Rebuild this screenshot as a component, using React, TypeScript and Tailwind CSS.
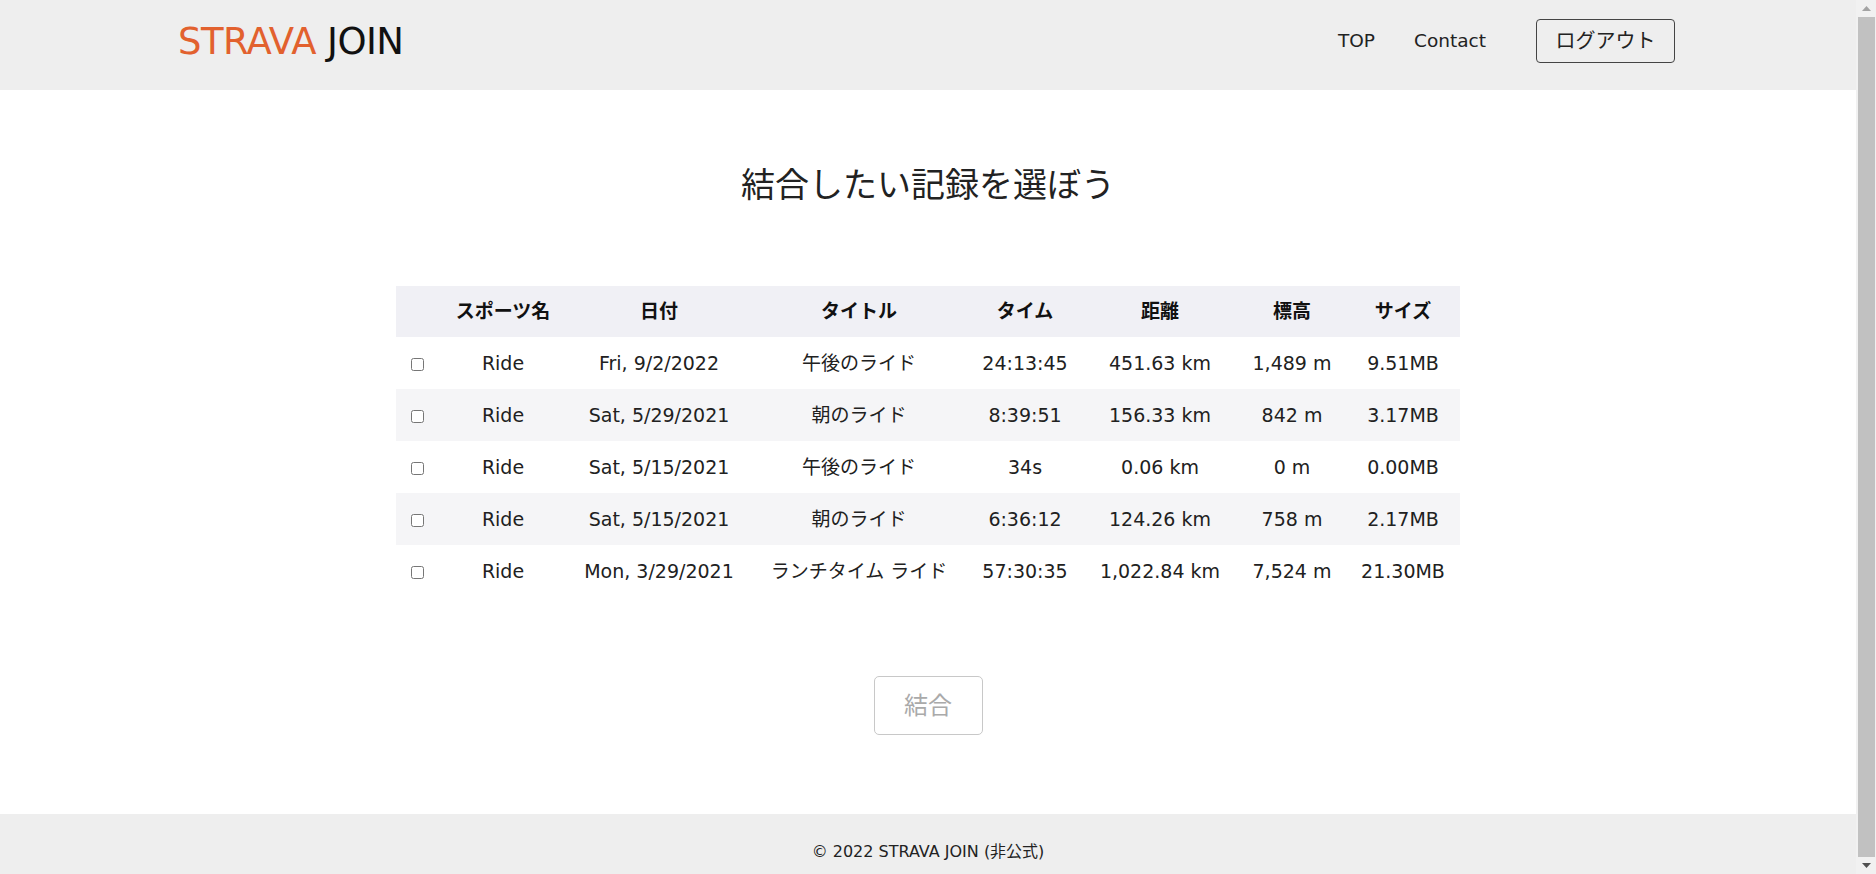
import React from "react";

const rows = [
  { date: "Fri, 9/2/2022", title: "午後のライド", time: "24:13:45", dist: "451.63 km", elev: "1,489 m", size: "9.51MB" },
  { date: "Sat, 5/29/2021", title: "朝のライド", time: "8:39:51", dist: "156.33 km", elev: "842 m", size: "3.17MB" },
  { date: "Sat, 5/15/2021", title: "午後のライド", time: "34s", dist: "0.06 km", elev: "0 m", size: "0.00MB" },
  { date: "Sat, 5/15/2021", title: "朝のライド", time: "6:36:12", dist: "124.26 km", elev: "758 m", size: "2.17MB" },
  { date: "Mon, 3/29/2021", title: "ランチタイム ライド", time: "57:30:35", dist: "1,022.84 km", elev: "7,524 m", size: "21.30MB" },
];

const font = { fontFamily: '"DejaVu Sans", "Noto Sans CJK JP", sans-serif' };

export default function App() {
  return (
    <div className="flex h-[874px] w-full overflow-hidden bg-white text-[#212121]" style={font}>
      <div className="flex flex-1 flex-col">
        <header className="h-[90px] shrink-0 bg-[#eeeeee] pt-[19px]">
          <div className="mx-auto flex h-[44px] w-[1500px] items-center justify-between pr-[3px]">
            <div className="text-[37px] leading-none tracking-[-0.6px]">
              <span className="text-[#e2612e]">STRAVA</span>
              <span className="text-[#111]"> JOIN</span>
            </div>
            <nav className="flex items-center text-[18.5px] text-[#222]">
              <a className="cursor-pointer">TOP</a>
              <a className="ml-[39px] cursor-pointer">Contact</a>
              <button className="ml-[50px] flex h-[44px] w-[139px] items-center justify-center rounded-[4px] border border-[#444] text-[20px] text-[#222]">
                ログアウト
              </button>
            </nav>
          </div>
        </header>

        <main className="flex flex-col items-center">
          <h1 className="mt-[71px] text-[34px] font-normal leading-[48px] text-[#222]">
            結合したい記録を選ぼう
          </h1>

          <table className="mt-[77px] w-[1064px] table-fixed border-collapse text-[19px]">
            <colgroup>
              <col className="w-[42px]" />
              <col className="w-[130px]" />
              <col className="w-[182px]" />
              <col className="w-[218px]" />
              <col className="w-[114px]" />
              <col className="w-[156px]" />
              <col className="w-[108px]" />
              <col className="w-[114px]" />
            </colgroup>
            <thead>
              <tr className="h-[51px] bg-[#f0f0f5] font-bold text-[#111]">
                <th></th>
                <th className="font-bold">スポーツ名</th>
                <th className="font-bold">日付</th>
                <th className="font-bold">タイトル</th>
                <th className="font-bold">タイム</th>
                <th className="font-bold">距離</th>
                <th className="font-bold">標高</th>
                <th className="font-bold">サイズ</th>
              </tr>
            </thead>
            <tbody>
              {rows.map((r, i) => (
                <tr key={i} className={i % 2 === 1 ? "h-[52px] bg-[#f5f5f7]" : "h-[52px] bg-white"}>
                  <td className="text-center">
                    <input type="checkbox" className="h-[13px] w-[13px] align-middle" />
                  </td>
                  <td className="text-center">Ride</td>
                  <td className="text-center whitespace-nowrap">{r.date}</td>
                  <td className="text-center whitespace-nowrap">{r.title}</td>
                  <td className="text-center">{r.time}</td>
                  <td className="text-center whitespace-nowrap">{r.dist}</td>
                  <td className="text-center whitespace-nowrap">{r.elev}</td>
                  <td className="text-center">{r.size}</td>
                </tr>
              ))}
            </tbody>
          </table>

          <button
            disabled
            className="mt-[79px] flex h-[59px] w-[109px] items-center justify-center rounded-[5px] border border-[#c8c8c8] text-[24px] text-[#aaaaaa]"
          >
            結合
          </button>
        </main>

        <footer className="mt-[79px] flex h-[76px] shrink-0 items-center justify-center bg-[#eeeeee] text-[16px] text-[#222]">
          © 2022 STRAVA JOIN (非公式)
        </footer>
      </div>

      <div className="flex h-full w-[20px] shrink-0 flex-col bg-[#f1f1f1]">
        <div className="flex h-[17px] items-center justify-center">
          <svg width="9" height="5" viewBox="0 0 9 5">
            <path d="M0 5 L4.5 0 L9 5 Z" fill="#a3a3a3" />
          </svg>
        </div>
        <div className="ml-[2px] mr-[1px] flex-1 bg-[#c1c1c1]"></div>
        <div className="flex h-[17px] items-center justify-center">
          <svg width="9" height="5" viewBox="0 0 9 5">
            <path d="M0 0 L9 0 L4.5 5 Z" fill="#505050" />
          </svg>
        </div>
      </div>
    </div>
  );
}
